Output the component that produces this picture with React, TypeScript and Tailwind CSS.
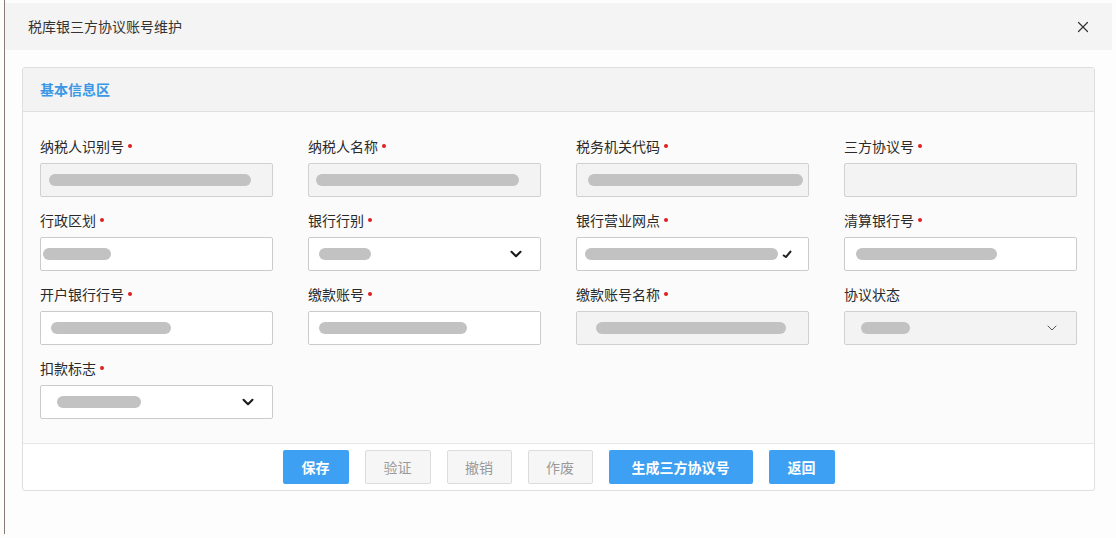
import React from "react";
import { ChevronDown, X } from "lucide-react";

type Field = {
  label: string;
  required: boolean;
  disabled: boolean;
  bar?: [number, number];
  select?: "bold" | "thin" | "cut";
};

const fields: Field[] = [
  { label: "纳税人识别号", required: true, disabled: true, bar: [8, 202] },
  { label: "纳税人名称", required: true, disabled: true, bar: [7, 203] },
  { label: "税务机关代码", required: true, disabled: true, bar: [11, 215] },
  { label: "三方协议号", required: true, disabled: true },
  { label: "行政区划", required: true, disabled: false, bar: [2, 68] },
  { label: "银行行别", required: true, disabled: false, bar: [10, 52], select: "bold" },
  { label: "银行营业网点", required: true, disabled: false, bar: [8, 193], select: "cut" },
  { label: "清算银行号", required: true, disabled: false, bar: [11, 141] },
  { label: "开户银行行号", required: true, disabled: false, bar: [10, 120] },
  { label: "缴款账号", required: true, disabled: false, bar: [10, 148] },
  { label: "缴款账号名称", required: true, disabled: true, bar: [19, 190] },
  { label: "协议状态", required: false, disabled: true, bar: [16, 49], select: "thin" },
  { label: "扣款标志", required: true, disabled: false, bar: [16, 84], select: "bold" },
];

function FieldBox({ f }: { f: Field }) {
  return (
    <div className="flex flex-col">
      <div className="h-[20px] leading-[20px] text-[14px] text-[#2a2a2a] flex items-center">
        <span>{f.label}</span>
        {f.required && (
          <span className="ml-[4px] inline-block w-[4px] h-[4px] rounded-full bg-[#e02020]" />
        )}
      </div>
      <div
        className={
          "mt-[7px] h-[34px] border rounded-[2px] flex items-center relative " +
          (f.disabled ? "bg-[#f3f3f3] border-[#d0d0d0]" : "bg-white border-[#cbcbcb]")
        }
      >
        {f.bar && (
          <div
            className="h-[12px] rounded-full bg-[#c2c2c2]"
            style={{ marginLeft: f.bar[0], width: f.bar[1] }}
          />
        )}
        {f.select === "bold" && (
          <ChevronDown size={18} strokeWidth={2.8} className="absolute right-[15px] text-[#1a1a1a]" />
        )}
        {f.select === "thin" && (
          <ChevronDown size={16} strokeWidth={1.5} className="absolute right-[16px] text-[#555]" />
        )}
        {f.select === "cut" && (
          <svg width="10" height="8" viewBox="0 0 10 8" className="absolute right-[16px]">
            <path d="M1 5 L4 7 L9 1" stroke="#222" strokeWidth="2" fill="none" />
          </svg>
        )}
      </div>
    </div>
  );
}

function Btn({ children, primary, w }: { children: React.ReactNode; primary?: boolean; w: string }) {
  return (
    <div
      className={
        "h-[34px] flex items-center justify-center text-[14px] rounded-[2px] " +
        w +
        (primary
          ? " bg-[#3ea0f2] text-white font-bold"
          : " bg-[#f6f6f6] border border-[#dcdcdc] text-[#9a9a9a]")
      }
    >
      {children}
    </div>
  );
}

export default function App() {
  return (
    <div
      className="w-[1116px] h-[538px] bg-[#fdfdfd] flex overflow-hidden"
      style={{ fontFamily: '"Noto Sans CJK SC", "Noto Sans", sans-serif' }}
    >
      <div className="w-[4px] shrink-0" />
      <div className="w-px h-[534px] bg-[#8a7c74] shrink-0" />
      <div className="flex-1 flex flex-col">
        <div className="mt-[3px] mr-[4px] h-[47px] bg-[#f4f4f4] flex items-center justify-between pl-[23px] pr-[20px]">
          <span className="text-[14px] text-[#333]">税库银三方协议账号维护</span>
          <X size={18} strokeWidth={1.6} className="text-[#333]" />
        </div>
        <div className="pt-[17px] pl-[17px]">
          <div className="w-[1073px] border border-[#dedede] rounded-[3px] bg-[#fbfbfb]">
            <div className="h-[44px] bg-[#f3f3f3] border-b border-[#e0e0e0] px-[17px] flex items-center rounded-t-[3px]">
              <span className="text-[14px] font-bold text-[#3a98e6]">基本信息区</span>
            </div>
            <div className="pt-[24px] pb-[24px] px-[17px] grid grid-cols-4 gap-x-[35px] gap-y-[13px]">
              {fields.map((f) => (
                <FieldBox key={f.label} f={f} />
              ))}
            </div>
            <div className="border-t border-[#e6e6e6] h-[47px] flex items-center justify-center gap-[16px] bg-white rounded-b-[3px]">
              <Btn primary w="w-[66px]">保存</Btn>
              <Btn w="w-[66px]">验证</Btn>
              <Btn w="w-[65px]">撤销</Btn>
              <Btn w="w-[65px]">作废</Btn>
              <Btn primary w="w-[144px]">生成三方协议号</Btn>
              <Btn primary w="w-[66px]">返回</Btn>
            </div>
          </div>
        </div>
      </div>
    </div>
  );
}
